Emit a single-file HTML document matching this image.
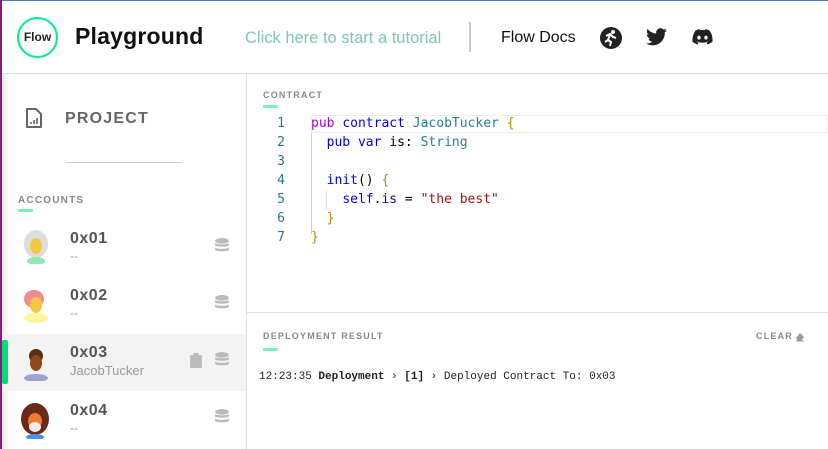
<!DOCTYPE html>
<html><head><meta charset="utf-8"><style>
*{margin:0;padding:0;box-sizing:border-box}
body{width:828px;height:449px;overflow:hidden;background:#fff;font-family:"Liberation Sans",sans-serif;position:relative}
.abs{position:absolute}
.hdr{left:0;top:0;width:828px;height:74px;border-top:1px solid #4a78b0;border-bottom:1px solid #ddd;background:#fff}
.purp{left:0;top:0;width:2px;height:449px;background:#8a1a8a}
.side{left:2px;top:74px;width:245px;height:375px;border-right:1px solid #ddd;background:linear-gradient(90deg,#e8e8e8 0,#fff 8px)}
.lbl{font-size:10px;letter-spacing:1.2px;color:#888;font-weight:bold}
.bar{height:3px;width:15px;background:#7ef0b4;border-radius:1px}
.acc{left:2px;width:244px;height:57px}
.addr{font-size:16px;font-weight:bold;color:#555;letter-spacing:.5px}
.sub{font-size:12px;color:#999}
.code{font-family:"DejaVu Sans Mono","Liberation Mono",monospace;font-size:13px;line-height:19px;white-space:pre}
.ln{color:#237893;text-align:right;width:30px}
.k{color:#0000ff}.p{color:#af00db}.t{color:#267f99}.b{color:#b58a00}.s{color:#a31515}.v{color:#001080}
.db{width:14px;height:16px}
</style></head><body>
<div class="abs hdr"></div>
<div class="abs" style="left:17px;top:17px;width:41px;height:41px;border:2px solid #00ef8b;border-radius:50%;font-size:12px;font-weight:bold;color:#222;text-align:center;line-height:37px">Flow</div>
<div class="abs" style="left:75px;top:23px;font-size:23px;font-weight:bold;color:#111;letter-spacing:.2px">Playground</div>
<div class="abs" style="left:245px;top:29px;font-size:16.5px;color:#7cc8b0">Click here to start a tutorial</div>
<div class="abs" style="left:469px;top:22px;width:2px;height:30px;background:#ccc"></div>
<div class="abs" style="left:501px;top:29px;font-size:16px;color:#111">Flow Docs</div>
<svg class="abs" style="left:599px;top:26px" width="24" height="24" viewBox="0 0 24 24"><circle cx="12" cy="12" r="11" fill="#222"/><circle cx="14" cy="6" r="2" fill="#fff"/><path d="M7 10l4-2 3 3 3 1M11 9l-2 5 3 2-1 4M9 14l-3 2" stroke="#fff" stroke-width="2" fill="none"/></svg>
<svg class="abs" style="left:646px;top:28px" width="21" height="18" viewBox="0 0 24 20"><path d="M24 2.3a10 10 0 0 1-2.8.8A5 5 0 0 0 23.3.4a10 10 0 0 1-3.1 1.2A4.9 4.9 0 0 0 11.8 6 14 14 0 0 1 1.700.9a4.9 4.9 0 0 0 1.5 6.6 5 5 0 0 1-2.2-.6 4.9 4.9 0 0 0 3.9 4.9 5 5 0 0 1-2.2.1 4.9 4.9 0 0 0 4.6 3.4A9.9 9.9 0 0 1 0 17.3 14 14 0 0 0 7.5 19.5c9 0 14-7.5 14-14v-.6A10 10 0 0 0 24 2.3z" fill="#222"/></svg>
<svg class="abs" style="left:692px;top:29px" width="21" height="16" viewBox="0 0 24 18"><path d="M20 1.5A19 19 0 0 0 15.4 0l-.6 1.2a18 18 0 0 0-5.6 0L8.6 0A19 19 0 0 0 4 1.5C1 6 .2 10.3.6 14.6A19 19 0 0 0 6.3 17.5l1.2-2a12 12 0 0 1-1.9-.9l.5-.4a13.5 13.5 0 0 0 11.8 0l.5.4a12 12 0 0 1-1.9.9l1.2 2a19 19 0 0 0 5.7-2.9C23.9 9.6 22.7 5.300 20 1.5zM8 12c-1.1 0-2-1-2-2.3S6.9 7.4 8 7.4s2 1 2 2.3S9.1 12 8 12zm8 0c-1.1 0-2-1-2-2.3s.9-2.3 2-2.3 2 1 2 2.3-.9 2.3-2 2.3z" fill="#222"/></svg>
<div class="abs purp"></div>
<div class="abs side"></div>
<svg class="abs" style="left:25px;top:108px" width="17" height="21" viewBox="0 0 17 21"><path d="M2 1h9l5 5v13H2z" fill="none" stroke="#666" stroke-width="2" stroke-linejoin="round"/><path d="M6 16v-2M9 16v-4M12 16v-6" stroke="#666" stroke-width="1.6"/></svg>
<div class="abs" style="left:65px;top:110px;font-size:16px;font-weight:bold;color:#666;letter-spacing:1.2px">PROJECT</div>
<div class="abs" style="left:66px;top:162px;width:116px;height:1px;background:#ccc"></div>
<div class="abs lbl" style="left:18px;top:195px">ACCOUNTS</div>
<div class="abs bar" style="left:18px;top:209px"></div>

<div class="abs acc" style="top:334px;background:#f3f3f3"></div>
<div class="abs" style="left:2px;top:340px;width:6px;height:44px;background:#00e070;border-radius:2px"></div>

<div class="abs" style="left:22px;top:230px;width:28px;height:34px"><svg width="28" height="34"><ellipse cx="14" cy="14" rx="12" ry="14" fill="#ddd"/><ellipse cx="14" cy="16" rx="6" ry="8" fill="#f5c842"/><ellipse cx="14" cy="31" rx="9" ry="4" fill="#8ee8b0"/></svg></div>
<div class="abs" style="left:22px;top:287px;width:28px;height:36px"><svg width="28" height="36"><ellipse cx="12" cy="12" rx="10" ry="9" fill="#f08c8c"/><ellipse cx="14" cy="18" rx="6" ry="8" fill="#f5c842"/><ellipse cx="14" cy="31" rx="12" ry="5" fill="#fdf59a"/></svg></div>
<div class="abs" style="left:22px;top:345px;width:28px;height:36px"><svg width="28" height="36"><ellipse cx="14" cy="11" rx="7" ry="7" fill="#5a2e10"/><ellipse cx="14" cy="18" rx="6" ry="8" fill="#8b4a1c"/><ellipse cx="14" cy="33" rx="12" ry="4" fill="#9aa8d0"/></svg></div>
<div class="abs" style="left:20px;top:403px;width:30px;height:36px"><svg width="30" height="36"><ellipse cx="15" cy="16" rx="14" ry="16" fill="#6a2a18"/><ellipse cx="15" cy="18" rx="7" ry="8" fill="#f07830"/><ellipse cx="15" cy="24" rx="6" ry="5" fill="#eee"/><ellipse cx="15" cy="34" rx="9" ry="3" fill="#4a90e0"/></svg></div>

<div class="abs addr" style="left:70px;top:230px">0x01</div><div class="abs sub" style="left:70px;top:249px">--</div>
<div class="abs addr" style="left:70px;top:287px">0x02</div><div class="abs sub" style="left:70px;top:306px">--</div>
<div class="abs addr" style="left:70px;top:344px">0x03</div><div class="abs sub" style="left:70px;top:363px;font-size:13px">JacobTucker</div>
<div class="abs addr" style="left:70px;top:402px">0x04</div><div class="abs sub" style="left:70px;top:421px">--</div>

<svg class="abs db" style="left:215px;top:238px" viewBox="0 0 12 14"><ellipse cx="6" cy="2.5" rx="6" ry="2.5" fill="#bbb"/><path d="M0 4v2.5C0 8 12 8 12 6.5V4c0 2-12 2-12 0zM0 8v2.5C0 12 12 12 12 10.5V8c0 2-12 2-12 0z" fill="#bbb"/></svg>
<svg class="abs db" style="left:215px;top:295px" viewBox="0 0 12 14"><ellipse cx="6" cy="2.5" rx="6" ry="2.5" fill="#bbb"/><path d="M0 4v2.5C0 8 12 8 12 6.5V4c0 2-12 2-12 0zM0 8v2.5C0 12 12 12 12 10.5V8c0 2-12 2-12 0z" fill="#bbb"/></svg>
<svg class="abs db" style="left:215px;top:352px" viewBox="0 0 12 14"><ellipse cx="6" cy="2.5" rx="6" ry="2.5" fill="#bbb"/><path d="M0 4v2.5C0 8 12 8 12 6.5V4c0 2-12 2-12 0zM0 8v2.5C0 12 12 12 12 10.5V8c0 2-12 2-12 0z" fill="#bbb"/></svg>
<svg class="abs db" style="left:215px;top:409px" viewBox="0 0 12 14"><ellipse cx="6" cy="2.5" rx="6" ry="2.5" fill="#bbb"/><path d="M0 4v2.5C0 8 12 8 12 6.5V4c0 2-12 2-12 0zM0 8v2.5C0 12 12 12 12 10.5V8c0 2-12 2-12 0z" fill="#bbb"/></svg>
<svg class="abs" style="left:190px;top:353px" width="12" height="15" viewBox="0 0 11 14"><rect x="0" y="2" width="11" height="12" rx="1" fill="#bbb"/><rect x="3" y="0" width="5" height="3" rx="1" fill="#bbb"/></svg>

<div class="abs lbl" style="left:263px;top:90px;font-size:9px">CONTRACT</div>
<div class="abs bar" style="left:263px;top:105px"></div>
<div class="abs" style="left:311px;top:115px;width:517px;height:18px;border:1px solid #eee"></div>
<div class="abs" style="left:311px;top:133px;width:1px;height:101px;background:#ccc"></div>
<div class="abs" style="left:326px;top:191px;width:1px;height:19px;background:#ddd"></div>
<div class="abs code ln" style="left:255px;top:114px">1
2
3
4
5
6
7</div>
<div class="abs code" style="left:311px;top:114px;color:#000"><span class="p">pub</span> <span class="k">contract</span> <span class="t">JacobTucker</span> <span class="b">{</span>
  <span class="k">pub var</span> is: <span class="t">String</span>

  <span class="k">init</span>() <span class="b">{</span>
    <span class="k">self</span>.<span class="v">is</span> = <span class="s">"the best"</span>
  <span class="b">}</span>
<span class="b">}</span></div>

<div class="abs" style="left:247px;top:312px;width:581px;height:1px;background:#ddd"></div>
<div class="abs lbl" style="left:263px;top:331px;font-size:9px">DEPLOYMENT RESULT</div>
<div class="abs bar" style="left:263px;top:348px"></div>
<div class="abs lbl" style="left:756px;top:331px;font-size:9px">CLEAR</div>
<svg class="abs" style="left:795px;top:332px" width="10" height="10" viewBox="0 0 10 10"><path d="M1 6l4-5 4 4-3 4H3z" fill="#999"/><path d="M1 9h8" stroke="#999"/></svg>
<div class="abs" style="left:259px;top:371px;font-family:'Liberation Mono',monospace;font-size:11px;color:#222;white-space:pre">12:23:35 <b>Deployment</b> › <b>[1]</b> › Deployed Contract To: 0x03</div>
</body></html>
